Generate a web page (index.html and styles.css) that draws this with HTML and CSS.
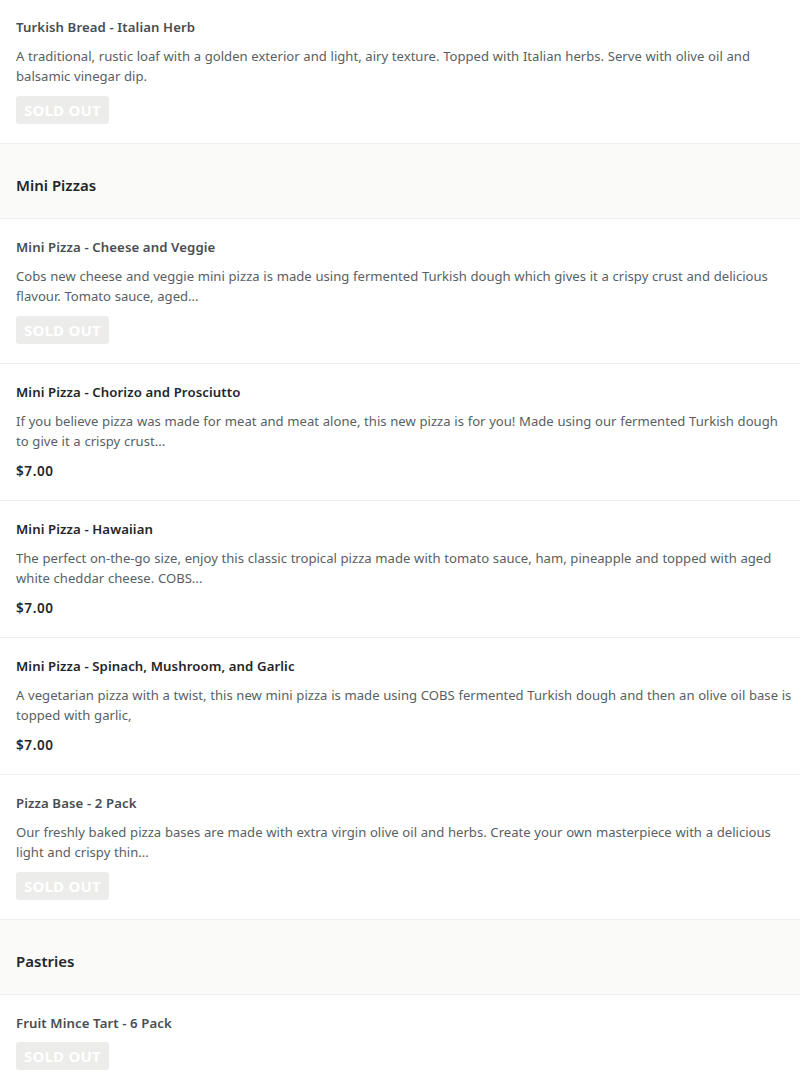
FILE: index.html
```html
<!DOCTYPE html>
<html lang="en">
<head>
<meta charset="utf-8">
<title>Menu</title>
<link rel="stylesheet" href="styles.css">
</head>
<body>
<div class="menu">
  <div class="item item--first">
    <div class="item-title item-title--muted">Turkish Bread - Italian Herb</div>
    <p class="item-desc">A traditional, rustic loaf with a golden exterior and light, airy texture. Topped with Italian herbs. Serve with olive oil and balsamic vinegar dip.</p>
    <span class="sold-out">SOLD OUT</span>
  </div>

  <div class="section-head">Mini Pizzas</div>

  <div class="item">
    <div class="item-title item-title--muted">Mini Pizza - Cheese and Veggie</div>
    <p class="item-desc">Cobs new cheese and veggie mini pizza is made using fermented Turkish dough which gives it a crispy crust and delicious flavour. Tomato sauce, aged...</p>
    <span class="sold-out">SOLD OUT</span>
  </div>
  <div class="item">
    <div class="item-title">Mini Pizza - Chorizo and Prosciutto</div>
    <p class="item-desc">If you believe pizza was made for meat and meat alone, this new pizza is for you! Made using our fermented Turkish dough to give it a crispy crust...</p>
    <div class="price">$7.00</div>
  </div>
  <div class="item">
    <div class="item-title">Mini Pizza - Hawaiian</div>
    <p class="item-desc">The perfect on-the-go size, enjoy this classic tropical pizza made with tomato sauce, ham, pineapple and topped with aged white cheddar cheese. COBS...</p>
    <div class="price">$7.00</div>
  </div>
  <div class="item">
    <div class="item-title">Mini Pizza - Spinach, Mushroom, and Garlic</div>
    <p class="item-desc">A vegetarian pizza with a twist, this new mini pizza is made using COBS fermented Turkish dough and then an olive oil base is topped with garlic,</p>
    <div class="price">$7.00</div>
  </div>
  <div class="item">
    <div class="item-title item-title--muted">Pizza Base - 2 Pack</div>
    <p class="item-desc">Our freshly baked pizza bases are made with extra virgin olive oil and herbs. Create your own masterpiece with a delicious light and crispy thin...</p>
    <span class="sold-out">SOLD OUT</span>
  </div>

  <div class="section-head">Pastries</div>

  <div class="item">
    <div class="item-title item-title--muted">Fruit Mince Tart - 6 Pack</div>
    <span class="sold-out">SOLD OUT</span>
  </div>
</div>
</body>
</html>
```

FILE: styles.css
```css
html, body {
  margin: 0;
  padding: 0;
  background: #ffffff;
}

body {
  font-family: "Noto Sans", "Open Sans", "DejaVu Sans", sans-serif;
  color: #2c3135;
}

.menu {
  display: flex;
  flex-direction: column;
  margin-top: -1px;
}

.item {
  display: flex;
  flex-direction: column;
  align-items: flex-start;
  gap: 10px;
  padding: 18px 8px 19px 16px;
  border-bottom: 1px solid #efefef;
}

.item-title {
  font-size: 13.2px;
  line-height: 20px;
  font-weight: 600;
  color: #22262a;
  margin-bottom: -1px;
  letter-spacing: 0.1px;
}

.item-title--muted {
  color: #474e53;
}

.item-desc {
  margin: 0;
  font-size: 13.1px;
  line-height: 20px;
  color: #585f64;
  word-spacing: 0.3px;
}

.price {
  font-size: 13.5px;
  line-height: 20px;
  font-weight: 600;
  color: #22262a;
  letter-spacing: 0.6px;
}

.sold-out {
  display: inline-block;
  background: #ececea;
  color: #ffffff;
  font-size: 15px;
  font-weight: 700;
  line-height: 28px;
  height: 28px;
  padding: 0 8px;
  border-radius: 3px;
  letter-spacing: 0.2px;
}

.section-head {
  background: #fafaf9;
  border-bottom: 1px solid #efefef;
  padding: 30px 16px 22px;
  font-size: 15px;
  line-height: 22px;
  font-weight: 600;
  color: #22262a;
}
```
